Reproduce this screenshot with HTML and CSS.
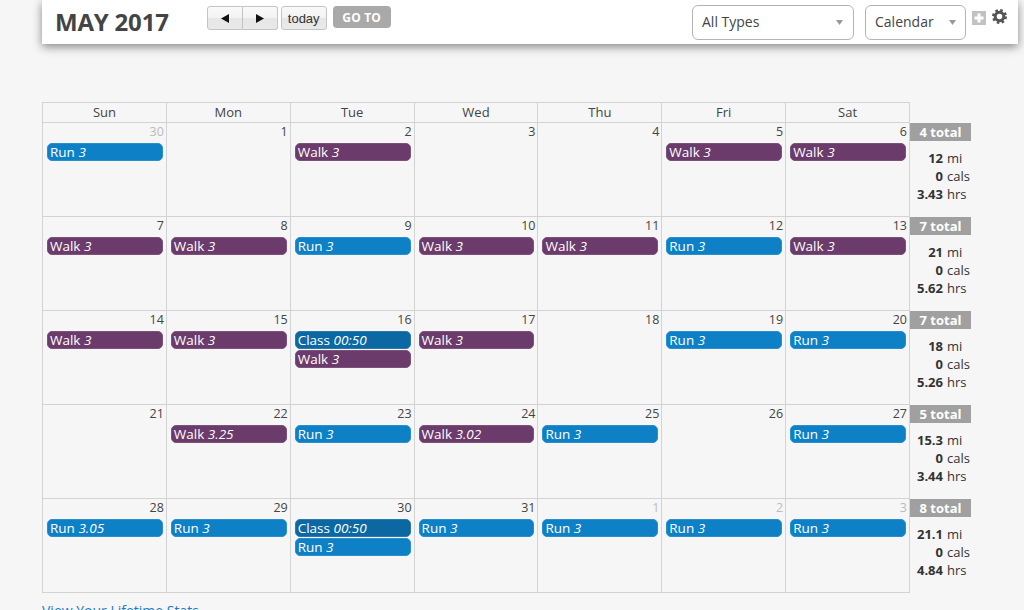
FILE: index.html
```html
<!DOCTYPE html>
<html>
<head>
<meta charset="utf-8">
<link rel="stylesheet" href="styles.css">
</head>
<body>
<div class="header">
  <h1 class="title">MAY 2017</h1>
  <div class="nav">
    <div class="btn-group">
      <button class="btn btn-arrow"><svg width="8" height="9" viewBox="0 0 8 9"><polygon points="8,0 8,9 0,4.5" fill="#111"/></svg></button>
      <button class="btn btn-arrow"><svg width="8" height="9" viewBox="0 0 8 9"><polygon points="0,0 0,9 8,4.5" fill="#111"/></svg></button>
    </div>
    <button class="btn btn-today">today</button>
    <button class="btn-goto">GO TO</button>
  </div>
  <div class="tools">
    <div class="select select-types"><span>All Types</span><svg width="7" height="5" viewBox="0 0 7 5"><polygon points="0,0 7,0 3.5,5" fill="#999"/></svg></div>
    <div class="select select-view"><span>Calendar</span><svg width="7" height="5" viewBox="0 0 7 5"><polygon points="0,0 7,0 3.5,5" fill="#999"/></svg></div>
    <svg class="icon-plus" width="14" height="14" viewBox="0 0 14 14"><rect width="14" height="14" fill="#c2c2c2"/><rect x="5.5" y="2.5" width="3" height="9" fill="#fff"/><rect x="2.5" y="5.5" width="9" height="3" fill="#fff"/></svg>
    <svg class="icon-gear" width="15" height="15" viewBox="0 0 15 15"><circle cx="7.5" cy="7.5" r="4.3" fill="none" stroke="#555" stroke-width="3"/><circle cx="7.5" cy="7.5" r="6" fill="none" stroke="#555" stroke-width="3" stroke-dasharray="2.4 2.31"/></svg>
  </div>
</div>

<div class="cal-wrap">
  <div class="month">
    <div class="dow">Sun</div><div class="dow">Mon</div><div class="dow">Tue</div><div class="dow">Wed</div><div class="dow">Thu</div><div class="dow">Fri</div><div class="dow">Sat</div>

    <div class="cell"><div class="num other">30</div><div class="ev run">Run <i>3</i></div></div>
    <div class="cell"><div class="num">1</div></div>
    <div class="cell"><div class="num">2</div><div class="ev walk">Walk <i>3</i></div></div>
    <div class="cell"><div class="num">3</div></div>
    <div class="cell"><div class="num">4</div></div>
    <div class="cell"><div class="num">5</div><div class="ev walk">Walk <i>3</i></div></div>
    <div class="cell"><div class="num">6</div><div class="ev walk">Walk <i>3</i></div></div>

    <div class="cell"><div class="num">7</div><div class="ev walk">Walk <i>3</i></div></div>
    <div class="cell"><div class="num">8</div><div class="ev walk">Walk <i>3</i></div></div>
    <div class="cell"><div class="num">9</div><div class="ev run">Run <i>3</i></div></div>
    <div class="cell"><div class="num">10</div><div class="ev walk">Walk <i>3</i></div></div>
    <div class="cell"><div class="num">11</div><div class="ev walk">Walk <i>3</i></div></div>
    <div class="cell"><div class="num">12</div><div class="ev run">Run <i>3</i></div></div>
    <div class="cell"><div class="num">13</div><div class="ev walk">Walk <i>3</i></div></div>

    <div class="cell"><div class="num">14</div><div class="ev walk">Walk <i>3</i></div></div>
    <div class="cell"><div class="num">15</div><div class="ev walk">Walk <i>3</i></div></div>
    <div class="cell"><div class="num">16</div><div class="ev cls">Class <i>00:50</i></div><div class="ev walk">Walk <i>3</i></div></div>
    <div class="cell"><div class="num">17</div><div class="ev walk">Walk <i>3</i></div></div>
    <div class="cell"><div class="num">18</div></div>
    <div class="cell"><div class="num">19</div><div class="ev run">Run <i>3</i></div></div>
    <div class="cell"><div class="num">20</div><div class="ev run">Run <i>3</i></div></div>

    <div class="cell"><div class="num">21</div></div>
    <div class="cell"><div class="num">22</div><div class="ev walk">Walk <i>3.25</i></div></div>
    <div class="cell"><div class="num">23</div><div class="ev run">Run <i>3</i></div></div>
    <div class="cell"><div class="num">24</div><div class="ev walk">Walk <i>3.02</i></div></div>
    <div class="cell"><div class="num">25</div><div class="ev run">Run <i>3</i></div></div>
    <div class="cell"><div class="num">26</div></div>
    <div class="cell"><div class="num">27</div><div class="ev run">Run <i>3</i></div></div>

    <div class="cell"><div class="num">28</div><div class="ev run">Run <i>3.05</i></div></div>
    <div class="cell"><div class="num">29</div><div class="ev run">Run <i>3</i></div></div>
    <div class="cell"><div class="num">30</div><div class="ev cls">Class <i>00:50</i></div><div class="ev run">Run <i>3</i></div></div>
    <div class="cell"><div class="num">31</div><div class="ev run">Run <i>3</i></div></div>
    <div class="cell"><div class="num other">1</div><div class="ev run">Run <i>3</i></div></div>
    <div class="cell"><div class="num other">2</div><div class="ev run">Run <i>3</i></div></div>
    <div class="cell"><div class="num other">3</div><div class="ev run">Run <i>3</i></div></div>
  </div>

  <div class="totals">
    <div class="wk"><div class="wk-bar">4 total</div><div class="stats"><b>12</b><span>mi</span><b>0</b><span>cals</span><b>3.43</b><span>hrs</span></div></div>
    <div class="wk"><div class="wk-bar">7 total</div><div class="stats"><b>21</b><span>mi</span><b>0</b><span>cals</span><b>5.62</b><span>hrs</span></div></div>
    <div class="wk"><div class="wk-bar">7 total</div><div class="stats"><b>18</b><span>mi</span><b>0</b><span>cals</span><b>5.26</b><span>hrs</span></div></div>
    <div class="wk"><div class="wk-bar">5 total</div><div class="stats"><b>15.3</b><span>mi</span><b>0</b><span>cals</span><b>3.44</b><span>hrs</span></div></div>
    <div class="wk"><div class="wk-bar">8 total</div><div class="stats"><b>21.1</b><span>mi</span><b>0</b><span>cals</span><b>4.84</b><span>hrs</span></div></div>
  </div>
</div>

<a class="footer-link" href="#">View Your Lifetime Stats</a>
</body>
</html>
```

FILE: styles.css
```css
* { box-sizing: border-box; }
html, body { margin: 0; padding: 0; }
body {
  background: #f6f6f6;
  font-family: "Open Sans", "DejaVu Sans", sans-serif;
  color: #444;
  width: 1024px;
  height: 610px;
  overflow: hidden;
}

/* header */
.header {
  margin-left: 42px;
  width: 976px;
  height: 44px;
  background: #fff;
  box-shadow: 0 3px 9px rgba(0,0,0,0.45);
  display: flex;
  align-items: flex-start;
  position: relative;
  z-index: 2;
}
.title {
  margin: 0 0 0 13px;
  font-size: 24px;
  line-height: 44px;
  font-weight: 700;
  color: #444;
  letter-spacing: -0.2px;
}
.nav {
  display: flex;
  align-items: flex-start;
  margin: 6px 0 0 38px;
}
.btn-group { display: flex; }
.btn {
  height: 24px;
  border: 1px solid #c4c4c4;
  background: linear-gradient(to bottom, #f9f9f9 0%, #f3f3f3 50%, #e6e6e6 50%, #e9e9e9 100%);
  font-family: "Liberation Sans", Arial, sans-serif;
  font-size: 13px;
  color: #333;
  padding: 0;
  display: flex;
  align-items: center;
  justify-content: center;
}
.btn-arrow { width: 36px; }
.btn-arrow:first-child { border-radius: 3px 0 0 3px; }
.btn-arrow:last-child { border-radius: 0 3px 3px 0; border-left: none; width: 35px; }
.btn-today { width: 46px; margin-left: 3px; border-radius: 3px; }
.btn-goto {
  margin-left: 6px;
  width: 58px;
  height: 22px;
  border: none;
  border-radius: 4px;
  background: #a9a9a9;
  color: #fff;
  font-family: "Open Sans", sans-serif;
  font-weight: 700;
  font-size: 12px;
  padding: 0;
  letter-spacing: 0.2px;
}

.tools {
  margin-left: auto;
  margin-right: 11px;
  display: flex;
  align-items: flex-start;
}
.select {
  margin-top: 5px;
  height: 35px;
  border: 1px solid #b4b4b4;
  border-radius: 6px;
  background: #fff;
  display: flex;
  align-items: center;
  justify-content: space-between;
  font-size: 14px;
  line-height: 18px;
  color: #444;
  padding: 0 10px 1px 9px;
}
.select-types { width: 162px; }
.select-view { width: 101px; margin-left: 11px; padding-right: 9px; }
.icon-plus { margin: 11px 0 0 6px; }
.icon-gear { margin: 9px 0 0 6px; }

/* calendar */
.cal-wrap {
  display: flex;
  margin: 58px 0 0 42px;
}
.month {
  width: 868px;
  display: grid;
  grid-template-columns: repeat(7, 1fr);
  grid-template-rows: 20px repeat(5, 94px);
  border-left: 1px solid #d3d3d3;
  border-top: 1px solid #d3d3d3;
}
.dow, .cell {
  border-right: 1px solid #d3d3d3;
  border-bottom: 1px solid #d3d3d3;
}
.dow {
  text-align: center;
  font-size: 13px;
  line-height: 19px;
  color: #444;
}
.cell { padding-top: 1px; }
.num {
  text-align: right;
  padding-right: 2px;
  font-size: 12.5px;
  line-height: 16px;
  color: #444;
}
.num.other { color: #bbb; }
.ev {
  margin: 3px 3px 0 4px;
  height: 18px;
  border-radius: 5px;
  color: #fff;
  font-size: 13.5px;
  line-height: 16px;
  padding-left: 2px;
  white-space: nowrap;
  overflow: hidden;
}
.ev + .ev { margin-top: 1px; }
.ev i { font-style: italic; }
.run { background: #0e80c6; border: 1px solid #2b8fcc; }
.walk { background: #6b3b6b; border: 1px solid #7d5279; }
.cls { background: #0c68a2; border: 1px solid #2a7aad; }

.totals {
  width: 114px;
  padding-top: 21px;
}
.wk { height: 94px; }
.wk-bar {
  width: 61px;
  height: 18px;
  background: #a0a0a0;
  color: #fff;
  font-weight: 700;
  font-size: 13px;
  line-height: 18px;
  text-align: center;
}
.stats {
  margin-top: 8px;
  display: grid;
  grid-template-columns: 33px auto;
  column-gap: 4px;
  font-size: 13px;
  line-height: 18px;
  color: #333;
}
.stats b { text-align: right; font-weight: 700; }

.footer-link {
  display: block;
  margin: 8px 0 0 42px;
  font-size: 14px;
  color: #1f7bc1;
  text-decoration: none;
}
```
